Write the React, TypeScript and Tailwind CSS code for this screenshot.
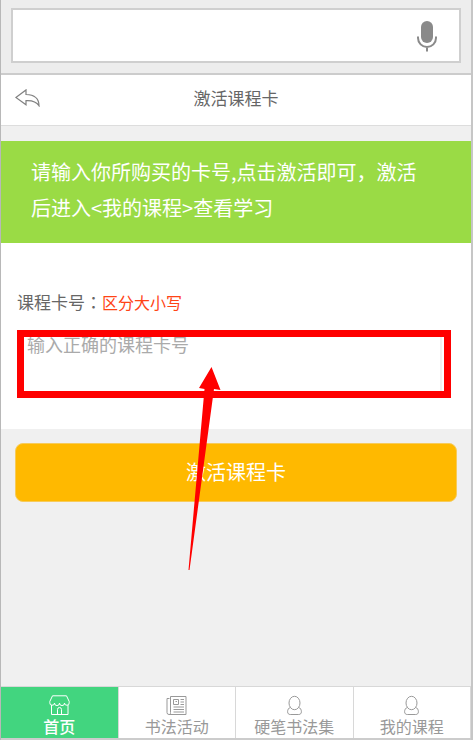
import type { ReactNode } from "react";

interface TabItem {
  label: string;
  href: string;
  icon: ReactNode;
  active?: boolean;
}

function ShopIcon() {
  return (
    <svg width="21" height="21" viewBox="0 0 21 21" fill="none" stroke="currentColor" strokeWidth="1" aria-hidden>
      <path d="M3.5 .8h14l2.700 5.700v1.200a2.300 2.300 0 0 1-4.700.4 2.500 2.500 0 0 1-5 0 2.500 2.500 0 0 1-5 0A2.300 2.300 0 0 1 .8 7.700V6.500z" />
      <path d="M2.500 10v9.500h16.500V10M8.500 19.500v-5a2 2 0 0 1 4 0v5" />
    </svg>
  );
}

function NewsIcon() {
  return (
    <svg width="21" height="21" viewBox="0 0 21 21" fill="none" stroke="currentColor" strokeWidth="1" aria-hidden>
      <path d="M4.500 1.500h15.500v18H3a2 2 0 0 1-2-2v-14h2.500M4.500 1.500v16a1.500 1.500 0 0 1-1.500 2" />
      <path d="M7.500 4.500h5v5h-5zM9.500 6.500h1.500M14.500 4.500h3.500M14.500 7h3.500M14.500 9.500h3.500M7.500 12h10.500M7.500 14.500h10.500M7.500 17h10.500" />
    </svg>
  );
}

function UserIcon() {
  return (
    <svg width="21" height="21" viewBox="0 0 21 21" fill="none" stroke="currentColor" strokeWidth="1" aria-hidden>
      <ellipse cx="10.500" cy="8" rx="5.500" ry="6.700" />
      <path d="M6.500 12.300c-2 .8-2.900 2.400-2.900 4.400 0 1.800 1 2.800 2.700 2.800h8.400c1.700 0 2.700-1 2.700-2.800 0-2-.9-3.600-2.900-4.400" />
    </svg>
  );
}

function BackIcon() {
  return (
    <svg width="25" height="18" viewBox="0 0 25 18" fill="none" stroke="currentColor" strokeWidth="1.2" aria-hidden>
      <path d="M.9 8.500 11 .9v4.600c8 .2 13 4 13 11.300-2.500-4-6.500-5.600-13-5.200v4.200z" />
    </svg>
  );
}

function MicIcon() {
  return (
    <svg width="20" height="32" viewBox="0 0 20 32" fill="none" aria-hidden>
      <rect x="4" y="1" width="12" height="22" rx="6" fill="currentColor" />
      <path d="M1 16.500v1.500a9 9 0 0 0 18 0v-1.500M10 27v4.500" stroke="currentColor" strokeWidth="2" />
    </svg>
  );
}

const tabs: TabItem[] = [
  { label: "首页", href: "#home", icon: <ShopIcon />, active: true },
  { label: "书法活动", href: "#events", icon: <NewsIcon /> },
  { label: "硬笔书法集", href: "#works", icon: <UserIcon /> },
  { label: "我的课程", href: "#courses", icon: <UserIcon /> },
];

function SearchBar() {
  return (
    <div className="border-b-2 border-[#cccccc] bg-[#ededed] px-2.5 pt-2 pb-2.5">
      <div className="flex h-[55px] items-center border-2 border-[#cfcfcf] bg-white pr-[22px]">
        <input type="text" aria-label="搜索" className="h-full min-w-0 flex-1 px-3 text-[18px] outline-none" />
        <button type="button" aria-label="语音搜索" className="text-[#8a8a8a]">
          <MicIcon />
        </button>
      </div>
    </div>
  );
}

export default function App() {
  return (
    <div className="flex min-h-screen flex-col border-r-2 border-l border-r-[#c6c6c6] border-l-[#b8b8b8] bg-[#f0f0f0] font-['Noto_Sans_CJK_SC',sans-serif] text-[#666666]">
      <SearchBar />

      <header className="grid h-[51px] grid-cols-[1fr_auto_1fr] items-center border-b border-[#dddddd] bg-white px-3.5 pb-1">
        <a href="#back" aria-label="返回" className="text-[#808080]">
          <BackIcon />
        </a>
        <h1 className="text-[17px] leading-6">激活课程卡</h1>
      </header>

      <main className="relative flex-1">
        <p className="mt-[15px] bg-[#9adb45] pt-[13px] pr-10 pb-[17px] pl-[30px] text-[20px] leading-9 text-white">
          请输入你所购买的卡号,点击激活即可，激活后进入&lt;我的课程&gt;查看学习
        </p>

        <form id="activate" className="bg-white px-4 pt-[47px] pb-[33px]">
          <label htmlFor="card" className="block text-[17px] leading-6">
            课程卡号<span className="font-['Noto_Sans_CJK_TC',sans-serif]">：</span>
            <span className="text-[16px] text-[#ff4416]">区分大小写</span>
          </label>
          <div className="relative mt-[18px]">
            <div className="pr-[13px]">
              <input
                id="card"
                type="text"
                placeholder="输入正确的课程卡号"
                className="block h-16 w-full border-2 border-[#f2f2f2] bg-white pb-10 pl-2 text-[18px] leading-5 outline-none placeholder:text-[#aaaaaa]"
              />
            </div>
            {/* highlight frame around the input */}
            <div className="pointer-events-none absolute -top-0.5 right-1 -bottom-0.5 left-0 border-7 border-[#ff0000]" aria-hidden />
          </div>
        </form>

        <div className="px-3.5 pt-3.5">
          <button
            type="submit"
            form="activate"
            className="h-[59px] w-full rounded-lg border border-[#f7cb5a] bg-[#ffb900] pb-0.5 text-[20px] text-white"
          >
            激活课程卡
          </button>
        </div>

        {/* pointer to the input */}
        <svg
          className="pointer-events-none absolute top-60 left-[186px]"
          width="36"
          height="206"
          viewBox="0 0 36 206"
          fill="#ff0000"
          aria-hidden
        >
          <path d="M24.500 1 33.500 24 27 23 2.500 204H1.500L17.500 23 12 22z" />
        </svg>
      </main>

      <nav className="grid grid-cols-4 border-t border-b-2 border-t-[#d8d8d8] border-b-[#cccccc] bg-white">
        {tabs.map((tab) => (
          <a
            key={tab.label}
            href={tab.href}
            className={
              tab.active
                ? "flex flex-col items-center border-r border-[#d8d8d8] bg-[#42d57f] pt-2 pb-0.5 text-[16px] leading-5 font-medium text-white"
                : "flex flex-col items-center border-r border-[#d8d8d8] pt-2 pb-0.5 text-[16px] leading-5 text-[#999999]"
            }
          >
            {tab.icon}
            <span>{tab.label}</span>
          </a>
        ))}
      </nav>
    </div>
  );
}
